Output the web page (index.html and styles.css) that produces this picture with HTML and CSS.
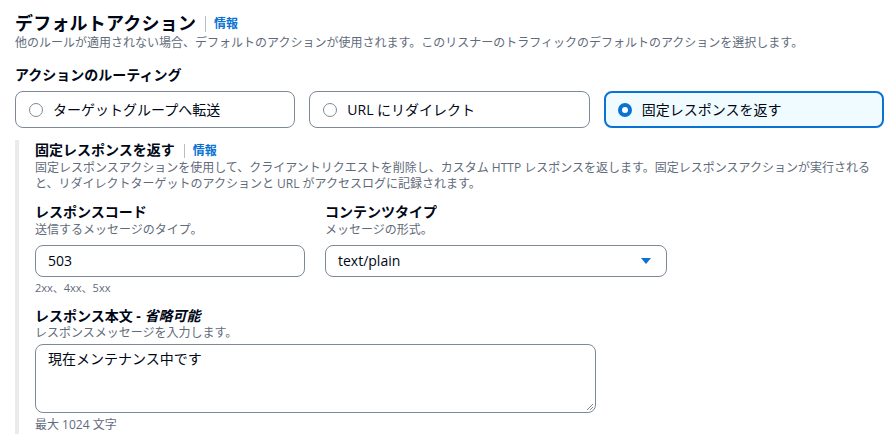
FILE: index.html
```html
<!DOCTYPE html>
<html lang="ja">
<head>
<meta charset="utf-8">
<title>デフォルトアクション</title>
<link rel="stylesheet" href="styles.css">
</head>
<body>
<div class="page">
  <div class="header">
    <h2 class="title">デフォルトアクション</h2>
    <span class="sep"></span>
    <a class="info" href="#">情報</a>
  </div>
  <p class="desc">他のルールが適用されない場合、デフォルトのアクションが使用されます。このリスナーのトラフィックのデフォルトのアクションを選択します。</p>

  <div class="group-label">アクションのルーティング</div>
  <div class="tiles">
    <label class="tile">
      <span class="radio"></span>
      <span class="tile-text">ターゲットグループへ転送</span>
    </label>
    <label class="tile">
      <span class="radio"></span>
      <span class="tile-text">URL にリダイレクト</span>
    </label>
    <label class="tile tile-selected">
      <span class="radio radio-checked"></span>
      <span class="tile-text">固定レスポンスを返す</span>
    </label>
  </div>

  <div class="section">
    <div class="section-head">
      <h3 class="section-title">固定レスポンスを返す</h3>
      <span class="sep sep-small"></span>
      <a class="info" href="#">情報</a>
    </div>
    <p class="section-desc">固定レスポンスアクションを使用して、クライアントリクエストを削除し、カスタム HTTP レスポンスを返します。固定レスポンスアクションが実行される<br>と、リダイレクトターゲットのアクションと URL がアクセスログに記録されます。</p>

    <div class="row">
      <div class="field field-code">
        <div class="label">レスポンスコード</div>
        <div class="sub">送信するメッセージのタイプ。</div>
        <div class="input">503</div>
        <div class="hint hint-small">2xx、4xx、5xx</div>
      </div>
      <div class="field field-type">
        <div class="label">コンテンツタイプ</div>
        <div class="sub">メッセージの形式。</div>
        <div class="input select">
          <span>text/plain</span>
          <svg class="caret" width="12" height="12" viewBox="0 0 12 12"><path d="M1 3h10L6 9z" fill="#0972d3"/></svg>
        </div>
      </div>
    </div>

    <div class="field field-body">
      <div class="label">レスポンス本文 - <i>省略可能</i></div>
      <div class="sub">レスポンスメッセージを入力します。</div>
      <div class="textarea">現在メンテナンス中です
        <svg class="grip" width="8" height="8" viewBox="0 0 8 8"><path d="M7 1L1 7M7 4L4 7" stroke="#7d8998" stroke-width="1" fill="none"/></svg>
      </div>
      <div class="hint">最大 1024 文字</div>
    </div>
  </div>
</div>
</body>
</html>
```

FILE: styles.css
```css
* { box-sizing: border-box; }
html, body { margin: 0; padding: 0; background: #ffffff; }
body {
  font-family: "Open Sans", "Noto Sans CJK JP", sans-serif;
  color: #000716;
  font-size: 14px;
}
.page { padding: 11px 12px 0 15px; width: 896px; }
.header { display: flex; align-items: center; height: 24px; }
.title { margin: 0; font-size: 18px; line-height: 24px; font-weight: 700; letter-spacing: 0.2px; }
.sep { display: inline-block; width: 1px; height: 16px; background: #b6bec9; margin: 2px 8px 0 9px; }
.sep-small { height: 14px; margin: 1px 8px 0 9px; }
.info { color: #0972d3; font-size: 12px; font-weight: 700; text-decoration: none; line-height: 16px; margin-top: 2px; }
.desc { margin: 0; font-size: 12px; line-height: 16px; color: #5f6b7a; }
.group-label { margin-top: 13px; font-size: 14px; font-weight: 700; line-height: 22px; }
.tiles { display: grid; grid-template-columns: repeat(3, 1fr); gap: 14px; margin-top: 5px; }
.tile {
  display: flex; align-items: center; height: 37px; padding: 0 13px;
  border: 1px solid #7d8998; border-radius: 8px; background: #fff;
}
.tile-selected { border: 2px solid #0972d3; background: #f0fbff; padding: 0 12px; }
.radio {
  width: 14px; height: 14px; border-radius: 50%; border: 1px solid #7d8998; flex: none; background: #fff;
}
.radio-checked { border: 4px solid #0972d3; }
.tile-text { margin-left: 10px; font-size: 14px; line-height: 20px; }
.section { margin-top: 12px; border-left: 4px solid #e9ebed; padding: 0 0 1px 16px; }
.section-head { display: flex; align-items: center; height: 20px; }
.section-title { margin: 0; font-size: 14px; line-height: 20px; font-weight: 700; }
.section-desc { margin: 0; font-size: 12px; line-height: 16px; color: #5f6b7a; }
.row { display: flex; gap: 20px; margin-top: 10px; }
.field-code { width: 270px; }
.field-type { width: 342px; }
.label { font-size: 14px; line-height: 20px; font-weight: 700; }
.label i { font-weight: 700; }
.sub { font-size: 12px; line-height: 16px; color: #5f6b7a; }
.input {
  margin-top: 7px; height: 32px; border: 1px solid #7d8998; border-radius: 8px;
  padding: 0 12px; display: flex; align-items: center; font-size: 14px; line-height: 20px;
}
.select { justify-content: space-between; padding-right: 14px; }
.caret { display: block; }
.hint { margin-top: 3px; font-size: 12px; line-height: 16px; color: #5f6b7a; }
.hint-small { font-size: 11px; }
.field-body { margin-top: 10px; width: 561px; }
.field-body .label { line-height: 19px; }
.textarea {
  position: relative;
  margin-top: 3px; height: 69px; border: 1px solid #7d8998; border-radius: 8px;
  padding: 4px 12px; font-size: 14px; line-height: 20px;
}
.grip { position: absolute; right: 1px; bottom: 1px; }
.field-body .hint { margin-top: 4px; }
```
